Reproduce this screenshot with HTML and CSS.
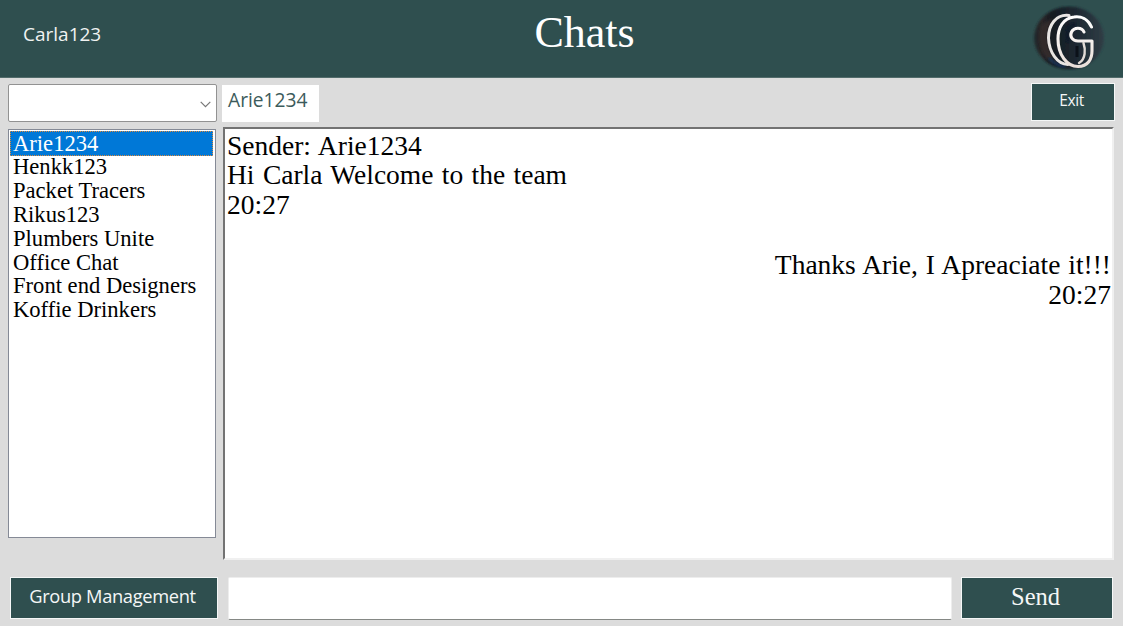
FILE: index.html
```html
<!DOCTYPE html>
<html lang="en">
<head>
<meta charset="utf-8">
<title>Chats</title>
<link rel="stylesheet" href="styles.css">
</head>
<body>
<div class="app">
  <header class="header">
    <span class="user">Carla123</span>
    <h1 class="title">Chats</h1>
    <svg class="logo" viewBox="0 0 74 66" width="74" height="66">
      <defs>
        <linearGradient id="disc" x1="0" x2="1"><stop offset="0" stop-color="#20292b"/><stop offset=".12" stop-color="#2b2527"/><stop offset=".25" stop-color="#151b22"/><stop offset=".6" stop-color="#1d2831"/><stop offset="1" stop-color="#303d46"/></linearGradient>
        <linearGradient id="tube" x1="0" y1="0" x2="0" y2="1"><stop offset="0" stop-color="#ffffff"/><stop offset="1" stop-color="#e9dfd9"/></linearGradient>
        <filter id="soft" x="-10%" y="-10%" width="120%" height="120%"><feGaussianBlur stdDeviation=".8"/></filter>
      </defs>
      <ellipse cx="37" cy="33" rx="35" ry="31.5" fill="url(#disc)" filter="url(#soft)"/>
      <path d="M9 20C5 34 8 47 18 57L25 58C14 45 12 27 21 13Z" fill="#302a2c" filter="url(#soft)"/>
      <path d="M17 53Q23 60 33 62" fill="none" stroke="#173052" stroke-width="3" filter="url(#soft)"/>
      <path d="M44 19C34 21 33 31 37 37" fill="none" stroke="#0e1a29" stroke-width="4" filter="url(#soft)"/>
      <path d="M45 41V52" fill="none" stroke="#0b1119" stroke-width="3"/>
      <g fill="none" stroke-linecap="round" stroke-linejoin="round">
        <path d="M37 10.5C24 9 16.5 20 16.5 33C17 47 25 59 36 59.5" stroke="#e8e5e3" stroke-width="3"/>
        <path d="M59.5 22C56 14 49 11 42 12C31 13 26 23 26 34C26 50 35 61.5 46 61.5C56 61.5 60 54 60 46V36H46C40 36 37.5 31 39.5 27C42 22 50 22 52 27" stroke="url(#tube)" stroke-width="3.1"/>
        <path d="M51.5 38C53.5 44 54 54 47 58" stroke="#e2dbd6" stroke-width="2.4"/>
      </g>
    </svg>
  </header>
  <main class="workspace">
    <aside class="sidebar">
      <div class="combo">
        <svg width="11" height="7" viewBox="0 0 11 7"><path d="M.7.9 5.5 5.7 10.3.9" fill="none" stroke="#777" stroke-width="1.2"/></svg>
      </div>
      <ul class="contacts">
        <li class="contact selected">Arie1234</li>
        <li class="contact">Henkk123</li>
        <li class="contact">Packet Tracers</li>
        <li class="contact">Rikus123</li>
        <li class="contact">Plumbers Unite</li>
        <li class="contact">Office Chat</li>
        <li class="contact">Front end Designers</li>
        <li class="contact">Koffie Drinkers</li>
      </ul>
      <button class="button group">Group Management</button>
    </aside>
    <section class="conversation">
      <div class="bar">
        <div class="peer">Arie1234</div>
        <button class="button exit">Exit</button>
      </div>
      <div class="messages">
        <div class="message">Sender: Arie1234<br>Hi Carla Welcome to the team<br>20:27</div>
        <div class="message own">Thanks Arie, I Apreaciate it!!!<br>20:27</div>
      </div>
      <div class="composer">
        <input class="entry" type="text" aria-label="Message">
        <button class="button send">Send</button>
      </div>
    </section>
  </main>
</div>
</body>
</html>
```
FILE: styles.css
```css
* { box-sizing: border-box; }
body { margin: 0; background: #dcdcdc; }
.app {
  width: 1123px;
  height: 626px;
  display: flex;
  flex-direction: column;
  overflow: hidden;
  font-family: "Open Sans", "Noto Sans", sans-serif;
}
.header {
  height: 78px;
  flex: none;
  display: grid;
  grid-template-columns: 1fr auto 1fr;
  align-items: start;
  padding: 0 17px 0 23px;
  background: #2f4f4f;
  border-bottom: 1px solid #526c6b;
  color: #fff;
}
.user { padding-top: 20px; font-size: 19px; line-height: 28px; color: #f0f3f2; }
.title {
  margin: 0;
  padding: 8px 0 0 40px;
  font: 400 44px/50px "Liberation Serif", serif;
}
.logo { justify-self: end; margin-top: 5px; }
.workspace { flex: 1; display: flex; padding: 6px 8px 7px 8px; }
.sidebar { width: 209px; margin-right: 6px; display: flex; flex-direction: column; flex: none; }
.combo {
  height: 38px;
  display: flex;
  align-items: center;
  justify-content: flex-end;
  padding: 2px 5px 0 0;
  background: #fff;
  border: 1px solid #929292;
  border-radius: 2px;
}
.contacts {
  list-style: none;
  margin: 7px 1px 0 0;
  padding: 1px;
  height: 409px;
  background: #fff;
  border: 1px solid #858a96;
  font: 22.6px/23.8px "Liberation Serif", serif;
  color: #000;
}
.contact { height: 23.8px; padding-left: 3px; white-space: nowrap; }
.selected { height: 25px; line-height: 25px; margin: 0 1px -.7px 0; background: #0078d7; color: #fff; outline: 1px dotted #dc8a3e; outline-offset: -1px; }
.button {
  padding: 0;
  border: 1px solid #f5f7f7;
  background: #2f4f4f;
  color: #f5f7f7;
  font-family: inherit;
}
.group { width: 208px; height: 42px; margin: 39px 0 0 2px; font-size: 18.3px; letter-spacing: -.35px; padding: 0 3px 5px 0; }
.conversation { width: 892px; display: flex; flex-direction: column; }
.bar { height: 38px; display: flex; justify-content: space-between; align-items: flex-start; }
.peer { width: 97px; height: 37px; margin: 1px 0 0 -1px; padding: 2px 0 0 6px; background: #fff; color: #3c5b5b; font-size: 19.2px; line-height: 25px; }
.exit { width: 84px; height: 38px; margin-top: -1px; font-size: 15.5px; letter-spacing: -.4px; padding: 0 3px 5px 0; }
.messages {
  height: 433px;
  margin: 5px 1px 0 0;
  padding: 1.5px 1px 0 2px;
  background: #fff;
  border: 2px solid;
  border-color: #737373 #f0f0f0 #f0f0f0 #737373;
  font: 27.5px/29.9px "Liberation Serif", serif;
  word-spacing: 1.5px;
  color: #000;
}
.own { margin-top: 30px; text-align: right; word-spacing: 1px; }
.composer { display: flex; gap: 9px; margin: 17px 2px 0 5px; }
.entry { flex: 1; min-width: 0; height: 43px; padding: 0 6px; border: 1px solid #ededed; border-bottom: 1px solid #858885; border-radius: 2px; background: #fff; outline: none; font: inherit; }
.send { width: 152px; height: 42px; padding: 0 3px 3px 0; font: 24.5px "Liberation Serif", serif; }
```
